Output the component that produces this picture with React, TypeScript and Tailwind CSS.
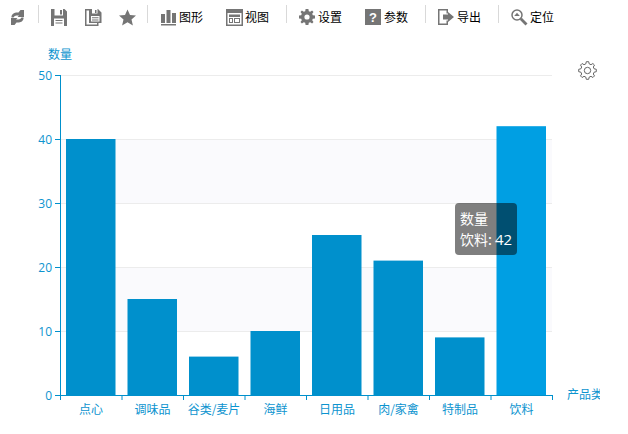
import React from "react";

const G = "#757575";
const Sep = ({ className = "" }: { className?: string }) => (
  <div className={"w-px h-[18px] bg-[#d9d9d9] shrink-0 " + className} />
);
const Label = ({ children, className = "ml-[3px]" }: { children: React.ReactNode; className?: string }) => (
  <span className={"text-[12px] leading-[18px] text-black whitespace-nowrap " + className}>{children}</span>
);
const Item = ({ className, children }: { className: string; children: React.ReactNode }) => (
  <div className={"mt-[3px] h-[18px] flex items-center shrink-0 " + className}>{children}</div>
);

const Refresh = () => (
  <svg width="13" height="15" viewBox="0 0 13 15" fill={G}>
    <path d="M0.5 7.5 L0.5 6 Q1.5 3 5 2.5 L7.5 2.5 L9.5 0 L13 0 L13 7 L6.5 7 L8 5.5 L5.5 5.5 Q3.5 5.5 2.5 7.5 Z" />
    <path d="M12.5 7.5 L12.5 9 Q11.5 12 8 12.5 L5.5 12.5 L3.5 15 L0 15 L0 8 L6.5 8 L5 9.5 L7.5 9.5 Q9.5 9.5 10.5 7.5 Z" />
  </svg>
);
const Save = () => (
  <svg width="17" height="17" viewBox="0 0 17 17" fill={G}>
    <path fillRule="evenodd" d="M0 0 H13.5 L16 2.5 V17 H0 Z M3.5 0 V6.5 H12 V0 Z M9 1 V5.5 H11 V1 Z M3 9.5 V17 H13 V9.5 Z" />
    <path d="M4.5 11 H11.5 V12 H4.5 Z M4.5 13.5 H11.5 V14.5 H4.5 Z" />
  </svg>
);
const SaveAs = () => (
  <svg width="17" height="17" viewBox="0 0 17 17" fill={G}>
    <path d="M0 0 H5 V1.5 H1.5 V15.5 H12 V14 H13.5 V17 H0 Z" />
    <path fillRule="evenodd" d="M4 0 H13 L16.5 3.5 V14 H4 Z M7 0 V4.5 H12.5 V0 Z M10 1 V4 H11.5 V1 Z M6 7 V12.5 H14.5 V7 Z" />
    <path d="M7 8.2 H13.5 V9.2 H7 Z M7 10.4 H13.5 V11.4 H7 Z" />
  </svg>
);
const Star = () => (
  <svg width="17" height="17" viewBox="0 0 17 17" fill={G}>
    <path d="M8.5 0.5 L11 6 L17 6.6 L12.5 10.5 L13.9 16.5 L8.5 13.3 L3.1 16.5 L4.5 10.5 L0 6.6 L6 6 Z" />
  </svg>
);
const Bars = () => (
  <svg width="15" height="17" viewBox="0 0 15 17" fill={G}>
    <path d="M0 5 H4 V14 H0 Z M5.5 1 H9.5 V14 H5.5 Z M11 4 H15 V14 H11 Z M0 15 H15 V16.5 H0 Z" />
  </svg>
);
const View = () => (
  <svg width="17" height="17" viewBox="0 0 17 17" fill={G}>
    <path fillRule="evenodd" d="M0 0 H17 V17 H0 Z M1.5 4 V15.5 H15.5 V4 Z" />
    <path fillRule="evenodd" d="M3 5.5 H14 V8 H3 Z M3 9 H7 V14 H3 Z M8 9 H14 V14 H8 Z M9 10 V13 H13 V10 Z M4 10 V13 H6 V10 Z" />
  </svg>
);
const Cog = () => (
  <svg width="16" height="16" viewBox="0 0 16 16" fill={G}>
    <path fillRule="evenodd" d="M6.6 0 H9.4 L9.8 2.2 L11.2 2.8 L13.1 1.5 L14.5 2.9 L13.2 4.8 L13.8 6.2 L16 6.6 V9.4 L13.8 9.8 L13.2 11.2 L14.5 13.1 L13.1 14.5 L11.2 13.2 L9.8 13.8 L9.4 16 H6.6 L6.2 13.8 L4.8 13.2 L2.9 14.5 L1.5 13.1 L2.8 11.2 L2.2 9.8 L0 9.4 V6.6 L2.2 6.2 L2.8 4.8 L1.5 2.9 L2.9 1.5 L4.8 2.8 L6.2 2.2 Z M8 5.4 A2.6 2.6 0 1 0 8 10.6 A2.6 2.6 0 1 0 8 5.4 Z" />
  </svg>
);
const Help = () => (
  <div className="w-[16px] h-[16px] bg-[#757575] flex items-center justify-center text-white text-[13px] font-bold leading-none font-['Liberation_Sans',sans-serif]">?</div>
);
const Export = () => (
  <svg width="16" height="16" viewBox="0 0 16 16" fill={G}>
    <path d="M0 0 H10 V4.5 H8.5 V1.5 H1.5 V14.5 H8.5 V11.5 H10 V16 H0 Z" />
    <path d="M5 5.5 H10 V3 L16 8 L10 13 V10.5 H5 Z" />
  </svg>
);
const Zoom = () => (
  <svg width="17" height="17" viewBox="0 0 17 17">
    <circle cx="6" cy="6" r="5" fill="none" stroke={G} strokeWidth="1.5" />
    <path d="M9.8 9.8 L15.5 15.5" stroke={G} strokeWidth="2.8" />
    <path d="M6 3.8 L8.8 7 H3.2 Z" fill={G} />
  </svg>
);

const cats = ["点心", "调味品", "谷类/麦片", "海鲜", "日用品", "肉/家禽", "特制品", "饮料"];
const vals = [40, 15, 6, 10, 25, 21, 9, 42];
const bl = [66, 127.5, 189, 250.5, 312, 373.5, 435, 496.5];
const AX = "#0090cc";
const TXT = "#0d94cf";

const Chart = () => (
  <svg width="600" height="394" viewBox="0 40 600 394" className="block font-['Noto_Sans_CJK_SC',sans-serif]">
    <rect x="60" y="139" width="492" height="64" fill="#fafafd" />
    <rect x="60" y="267" width="492" height="64" fill="#fafafd" />
    {[75, 139, 203, 267, 331].map((y) => (
      <line key={y} x1="60" x2="552" y1={y + 0.5} y2={y + 0.5} stroke="#ececec" />
    ))}
    {vals.map((v, i) => (
      <rect
        key={i}
        x={bl[i]}
        y={395 - v * 6.4}
        width="49.5"
        height={v * 6.4}
        fill={i === 7 ? "#009fe3" : "#0090cc"}
      />
    ))}
    <line x1="60.5" x2="60.5" y1="75" y2="396" stroke={AX} />
    <line x1="60" x2="552" y1="395.5" y2="395.5" stroke={AX} />
    {[75, 139, 203, 267, 331, 395].map((y, i) => (
      <g key={y}>
        <line x1="55" x2="60" y1={y + 0.5} y2={y + 0.5} stroke={AX} />
        <text x="52" y={y + 4.5} textAnchor="end" fontSize="12" fill={TXT} fontFamily="'Open Sans',sans-serif">
          {50 - i * 10}
        </text>
      </g>
    ))}
    {[0, 1, 2, 3, 4, 5, 6, 7, 8].map((i) => (
      <line key={i} x1={60.5 + i * 61.5} x2={60.5 + i * 61.5} y1="395" y2="400" stroke={AX} />
    ))}
    {cats.map((c, i) => (
      <text key={c} x={91 + i * 61.5} y="414" textAnchor="middle" fontSize="12" fill={TXT}>
        {c}
      </text>
    ))}
    <text x="48" y="59" fontSize="12" fill={TXT}>数量</text>
    <text x="567" y="399" fontSize="12" fill={TXT}>产品类别</text>
    <g transform="translate(579,61)" fill="none" stroke="#666" strokeWidth="1">
      <path d="M7.3 0.7 H9.7 L10.2 2.9 L12 3.7 L13.9 2.5 L15.5 4.1 L14.3 6 L15.1 7.8 L17.3 8.3 V10.7 L15.1 11.2 L14.3 13 L15.5 14.9 L13.9 16.5 L12 15.3 L10.2 16.1 L9.7 18.3 H7.3 L6.8 16.1 L5 15.3 L3.1 16.5 L1.5 14.9 L2.7 13 L1.9 11.2 L-0.3 10.7 V8.3 L1.9 7.8 L2.7 6 L1.5 4.1 L3.1 2.5 L5 3.7 L6.8 2.9 Z" />
      <circle cx="8.5" cy="9.5" r="3.2" />
    </g>
  </svg>
);

export default function App() {
  return (
    <div className="w-[628px] h-[434px] bg-white overflow-hidden font-['Noto_Sans_CJK_SC',sans-serif]">
      <div className="h-[40px] flex items-start pt-[5px]">
        <Item className="ml-[11px] w-[27px]"><Refresh /></Item>
        <Sep />
        <Item className="ml-[12px]"><Save /></Item>
        <Item className="ml-[17px]"><SaveAs /></Item>
        <Item className="ml-[17px]"><Star /></Item>
        <Sep className="ml-[11px]" />
        <Item className="ml-[13px]"><Bars /><Label>图形</Label></Item>
        <Item className="ml-[23px]"><View /><Label className="ml-[2px]">视图</Label></Item>
        <Sep className="ml-[17px]" />
        <Item className="ml-[12px]"><Cog /><Label>设置</Label></Item>
        <Item className="ml-[23px]"><Help /><Label>参数</Label></Item>
        <Sep className="ml-[17px]" />
        <Item className="ml-[12px]"><Export /><Label>导出</Label></Item>
        <Sep className="ml-[17px]" />
        <Item className="ml-[12px]"><Zoom /><Label className="ml-[2px]">定位</Label></Item>
      </div>
      <div className="relative w-[600px] h-[394px] overflow-hidden">
        <Chart />
        <div className="absolute left-[455px] top-[163px] w-[62px] h-[52px] rounded-[4px] bg-black/50 text-white text-[14px] leading-[21px] px-[5px] py-[5px] whitespace-nowrap">
          <div>数量</div>
          <div>饮料: <span className="text-[15px] font-['Open_Sans',sans-serif]">42</span></div>
        </div>
      </div>
    </div>
  );
}
